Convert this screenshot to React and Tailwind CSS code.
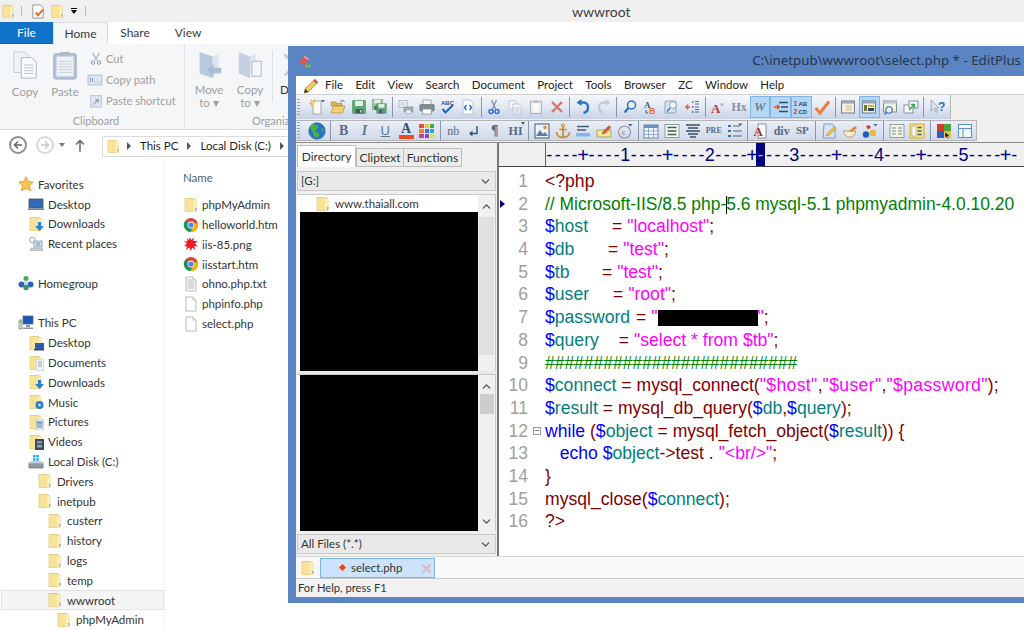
import React from "react";
import { ChevronDown, ChevronUp } from "lucide-react";

const S = ({ children, s = 16, v = 16, className = "" }) => (
  <svg width={s} height={s} viewBox={`0 0 ${v} ${v}`} className={`shrink-0 ${className}`}>{children}</svg>
);

const Folder = ({ s = 16 }) => (
  <S s={s}>
    <path d="M2 1.500h8.500l2.500 1.500v11.500H2z" fill="#f2d67f" stroke="#d8b862" strokeWidth=".6" />
    <path d="M9.500 2.200l3.500 1v11.300H9.500z" fill="#fbeeb8" />
    <path d="M2.300 2h7v12.300h-7z" fill="#f8e39a" />
    <path d="M12 11h1.400v2.400H12z" fill="#7fb2c9" />
  </S>
);
const FolderBadge = ({ b }) => (
  <span className="relative inline-flex w-4 h-4 shrink-0">
    <Folder />
    <span className="absolute right-0 bottom-0">{b}</span>
  </span>
);
const Chrome = () => (
  <S>
    <circle cx="8" cy="8" r="7" fill="#db4437" />
    <path d="M8 8L1.900 11.500A7 7 0 0 1 2.600 3.400z" fill="#0f9d58" />
    <path d="M8 8l6.500 -2.500A7 7 0 0 1 7 15z" fill="#f4b400" />
    <path d="M1.900 11.500A7 7 0 0 0 7.500 15L10 10z" fill="#0f9d58" />
    <circle cx="8" cy="8" r="3.400" fill="#fff" />
    <circle cx="8" cy="8" r="2.600" fill="#4285f4" />
  </S>
);
const Page = ({ lines }) => (
  <S>
    <path d="M3 1h7l3 3v11H3z" fill="#fcfcfc" stroke="#a9a9a9" strokeWidth=".8" />
    <path d="M10 1v3h3" fill="#eee" stroke="#a9a9a9" strokeWidth=".6" />
    {lines && <path d="M4.500 4h5M4.500 6h7M4.500 8h7M4.500 10h7M4.500 12h7" stroke="#9a9a9a" strokeWidth=".7" />}
  </S>
);
const Splat = () => (
  <S>
    <path d="M7 1l1.200 3L11 1.500l-.6 3.500L15 5l-3 2.500 3 3-3.600-.4.6 3.600-2.800-2L7.500 15l-1-3.500L3 14l1-3.500L1 10l3-2.500L1 5l3.500.5L4 2l2 2z" fill="#ee1c25" />
  </S>
);
const Star = () => (
  <S>
    <path d="M8 .8l2.200 4.700 5 .6-3.700 3.500 1 5.100L8 12.200l-4.500 2.500 1-5.100L.8 6.100l5-.6z" fill="#fcc54c" stroke="#e98a2e" strokeWidth=".8" />
  </S>
);
const Monitor = () => (
  <S>
    <rect x="1" y="3" width="14" height="9" fill="#2f6cb5" stroke="#3c4f68" strokeWidth=".8" />
    <path d="M0 12.500h16V14H0z" fill="#6e7f92" />
  </S>
);
const Recent = () => (
  <S>
    <circle cx="4.500" cy="4" r="3" fill="#eef2f5" stroke="#8aa0a8" strokeWidth=".8" />
    <rect x="6" y="5" width="8" height="6" fill="#d7e2ea" stroke="#7e8f9c" strokeWidth=".7" />
    <path d="M3 12h11l1 2.500H2z" fill="#c9cfd4" stroke="#8c959c" strokeWidth=".5" />
    <path d="M8 7h4M8 9h4" stroke="#5b86ad" strokeWidth=".8" />
  </S>
);
const Home = () => (
  <S>
    <circle cx="8" cy="3.500" r="2.500" fill="#4aa84a" />
    <circle cx="3.500" cy="9.500" r="3" fill="#2d63c8" />
    <circle cx="12.500" cy="9.500" r="3" fill="#2d63c8" />
    <circle cx="8" cy="12.500" r="2.700" fill="#3f9a3f" />
    <circle cx="8" cy="8" r="1.800" fill="#b9d2ee" />
  </S>
);
const PC = () => (
  <S>
    <rect x="5" y="1" width="10" height="8" fill="#1b55c0" stroke="#5f6b78" strokeWidth=".8" />
    <path d="M8 10h4v2H8zM5 12.500h10v1.500H5z" fill="#8b98a4" />
    <rect x="1" y="5" width="3" height="9" fill="#cfd6db" stroke="#6b7c5c" strokeWidth=".6" />
    <rect x="1.800" y="6.500" width="1.400" height="1.400" fill="#4fb04f" />
  </S>
);
const Disk = () => (
  <S>
    <path d="M5 1h2.500v2.500H5zM8.300 1h2.500v2.500H8.300zM5 4.300h2.500v2.500H5zM8.300 4.300h2.500v2.500H8.300z" fill="#19aeea" />
    <path d="M1 9h14v5H1z" fill="#8e9aa3" stroke="#5f6a72" strokeWidth=".7" />
    <path d="M1 8l2-1h10l2 1v1.500H1z" fill="#c8d0d5" />
    <rect x="2.500" y="11" width="2" height="1.200" fill="#54d14d" />
  </S>
);
const Dl = <svg width="9" height="10" viewBox="0 0 9 10"><path d="M3 0h3v4h3L4.500 9 0 4h3z" fill="#2d7fd3" /></svg>;
const Ds = <svg width="10" height="9" viewBox="0 0 10 9"><path d="M1 1h9v6H1z" fill="#245fa8" /><path d="M0 7h10v1.500H0z" fill="#3a4a5c" /></svg>;
const Dc = <svg width="8" height="12" viewBox="0 0 8 12"><path d="M0 0h8v12H0z" fill="#f3f5f6" stroke="#9aa5ad" strokeWidth=".6" /><path d="M2 3h4M2 5h4M2 7h4" stroke="#7a8a98" strokeWidth=".7" /></svg>;
const Mu = <svg width="9" height="10" viewBox="0 0 9 10"><circle cx="4.500" cy="5" r="4" fill="#2d7fd3" /><circle cx="4.500" cy="5" r="1.200" fill="#fff" /></svg>;
const Pi = <svg width="9" height="11" viewBox="0 0 9 11"><path d="M0 0h9v11H0z" fill="#e9eef1" stroke="#8b9aa3" strokeWidth=".5" /><path d="M1.500 2h6v3h-6z" fill="#6bb3dd" /><path d="M1.500 6h6M1.500 8h6" stroke="#5b7d93" /></svg>;
const Vi = <svg width="9" height="11" viewBox="0 0 9 11"><path d="M0 0h9v11H0z" fill="#3f4a52" /><path d="M2 2h5v2.500H2z" fill="#6a9cc0" /><path d="M2 6h5v2.500H2z" fill="#86a7bb" /></svg>;

const navRows = [
  { t: "Favorites", l: 0, i: <Star /> },
  { t: "Desktop", l: 1, i: <Monitor /> },
  { t: "Downloads", l: 1, i: <FolderBadge b={Dl} /> },
  { t: "Recent places", l: 1, i: <Recent /> },
  {},
  { t: "Homegroup", l: 0, i: <Home /> },
  {},
  { t: "This PC", l: 0, i: <PC /> },
  { t: "Desktop", l: 1, i: <FolderBadge b={Ds} /> },
  { t: "Documents", l: 1, i: <FolderBadge b={Dc} /> },
  { t: "Downloads", l: 1, i: <FolderBadge b={Dl} /> },
  { t: "Music", l: 1, i: <FolderBadge b={Mu} /> },
  { t: "Pictures", l: 1, i: <FolderBadge b={Pi} /> },
  { t: "Videos", l: 1, i: <FolderBadge b={Vi} /> },
  { t: "Local Disk (C:)", l: 1, i: <Disk /> },
  { t: "Drivers", l: 2, i: <Folder /> },
  { t: "inetpub", l: 2, i: <Folder /> },
  { t: "custerr", l: 3, i: <Folder /> },
  { t: "history", l: 3, i: <Folder /> },
  { t: "logs", l: 3, i: <Folder /> },
  { t: "temp", l: 3, i: <Folder /> },
  { t: "wwwroot", l: 3, i: <Folder />, sel: true },
  { t: "phpMyAdmin", l: 4, i: <Folder /> },
];
const indent = ["pl-[18px]", "pl-[28px]", "pl-[37px]", "pl-[47px]", "pl-[56px]"];

const files = [
  ["phpMyAdmin", <Folder />],
  ["helloworld.htm", <Chrome />],
  ["iis-85.png", <Splat />],
  ["iisstart.htm", <Chrome />],
  ["ohno.php.txt", <Page lines />],
  ["phpinfo.php", <Page />],
  ["select.php", <Page />],
];

function Ribbon() {
  return (
    <div className="h-[86px] bg-[#f5f6f7] border-b border-[#dadbdc] flex text-[#a0a0a0] text-[11px]">
      <div className="w-[185px] border-r border-[#e2e3e4] flex flex-col">
        <div className="flex h-[69px] pt-[6px]">
          <div className="w-[50px] flex flex-col items-center">
            <S s={30}>
              <path d="M2 1h6l2 2v9H2z" fill="#eef3fa" stroke="#bccbe0" strokeWidth=".5" />
              <path d="M6 4h5.500L14 6.500V15H6z" fill="#f8fafc" stroke="#a9b6c8" strokeWidth=".5" />
              <path d="M7.500 8h5M7.500 9.500h5M7.500 11h5M7.500 12.500h5" stroke="#b5bfcc" strokeWidth=".5" />
            </S>
            <span className="mt-[3px] text-[11.500px]">Copy</span>
          </div>
          <div className="w-[30px] flex flex-col items-center">
            <S s={30}>
              <rect x="2" y="2" width="12" height="13.500" rx="1" fill="#b6c4d8" stroke="#8d9db4" strokeWidth=".4" />
              <rect x="3.500" y="3.500" width="9" height="10.500" fill="#eef2f7" />
              <path d="M4.500 6h7M4.500 7.500h7M4.500 9h7M4.500 10.500h7M4.500 12h7" stroke="#c5cedb" strokeWidth=".5" />
              <rect x="5.500" y="1" width="5" height="2" fill="#aeb9c8" />
            </S>
            <span className="mt-[3px] text-[11.500px]">Paste</span>
          </div>
          <div className="ml-[9px] flex flex-col gap-[3px]">
            <div className="flex items-center gap-[3px] h-[18px]">
              <S s={14}><path d="M4 1l5 8M12 1L7 9" stroke="#a9b2bd" strokeWidth="1.300" fill="none" /><circle cx="4.500" cy="12" r="2" fill="none" stroke="#8c9bb0" strokeWidth="1.200" /><circle cx="11.500" cy="12" r="2" fill="none" stroke="#8c9bb0" strokeWidth="1.200" /></S>
              <span>Cut</span>
            </div>
            <div className="flex items-center gap-[3px] h-[18px] -ml-[2px]">
              <S s={16}><rect x="1" y="3" width="14" height="10" fill="#dbe4f1" stroke="#a3b2c7" strokeWidth=".7" /><path d="M3.500 6v4M5.500 6v4M8 10h.6M10 10h.6M12 10h.6" stroke="#8c9bb0" /></S>
              <span>Copy path</span>
            </div>
            <div className="flex items-center gap-[3px] h-[18px]">
              <S s={14}><rect x="2" y="2" width="12" height="13" fill="#dfe6ef" stroke="#a3b2c7" strokeWidth=".8" /><path d="M5 12l5-5M7 6.500h3.500V10" stroke="#7f93ad" strokeWidth="1.200" fill="none" /></S>
              <span>Paste shortcut</span>
            </div>
          </div>
        </div>
        <div className="text-center pl-[8px] leading-[16px]">Clipboard</div>
      </div>
      <div className="flex-1 flex flex-col">
        <div className="flex h-[69px] pt-[6px] text-[11.500px]">
          <div className="w-[42px] ml-[3px] flex flex-col items-center leading-[13px]">
            <S s={30}><path d="M3 1l7 2.500V15l-7-2.500z" fill="#b9c9de" /><path d="M10 3.500L13 2v10h-3z" fill="#dce5f0" /><path d="M7 10.500l3.500-3v2h4v3h-4v2z" fill="#a9bdd6" /></S>
            <span className="mt-[3px]">Move</span>
            <span>to ▾</span>
          </div>
          <div className="w-[40px] flex flex-col items-center leading-[13px]">
            <S s={30}><path d="M2 1l6 2.500V15l-6-2.500z" fill="#c3d1e3" /><path d="M8 3.500L11 2v10H8z" fill="#dce5f0" /><path d="M9 6h5v8H9z" fill="#f4f7fa" stroke="#a9b6c8" strokeWidth=".5" /></S>
            <span className="mt-[3px]">Copy</span>
            <span>to ▾</span>
          </div>
          <div className="ml-[2px] w-px h-[52px] bg-[#dfe0e1]" />
          <div className="ml-[7px] flex flex-col items-start">
            <S s={30}><path d="M3 2l5 5 5-5 1 1-5 5 5 5-1 1-5-5-5 5-1-1 5-5-5-5z" fill="#c5ccd6" /></S>
            <span className="mt-[3px] leading-[13px] text-[#333]">De</span>
          </div>
        </div>
        <div className="leading-[16px] pl-[67px]">Organize</div>
      </div>
    </div>
  );
}

function Explorer() {
  return (
    <div className="h-full flex flex-col font-['Lato',sans-serif]">
      <div className="h-[22px] bg-[#f0f0f0] flex items-center pl-[1px] relative">
        <Folder s={15} />
        <span className="w-px h-[10px] bg-[#bbb] ml-[5px]" />
        <span className="ml-[9px]"><S s={15}><path d="M2 1h8l3 3v11H2z" fill="#fff" stroke="#777" strokeWidth=".8" /><path d="M5 9l2.500 3L13 6" stroke="#e06a1c" strokeWidth="2" fill="none" /></S></span>
        <span className="ml-[4px]"><Folder s={15} /></span>
        <span className="ml-[6px] flex flex-col items-center gap-[1px]"><span className="w-[6px] h-px bg-black" /><span className="w-0 h-0 border-x-[3.500px] border-x-transparent border-t-[4px] border-t-black" /></span>
        <span className="w-px h-[10px] bg-[#bbb] ml-[8px]" />
        <span className="ml-[486px] text-[14px] text-[#3f3f3f]">wwwroot</span>
      </div>
      <div className="h-[22px] flex items-stretch text-[12px] text-[#3b3b3b] bg-white">
        <div className="w-[53px] bg-[#1072c9] text-white flex items-center justify-center border-b border-[#0d5fa8]">File</div>
        <div className="w-[55px] bg-[#f5f6f7] border-x border-t border-[#dadbdc] flex items-center justify-center">Home</div>
        <div className="w-[54px] flex items-center justify-center">Share</div>
        <div className="w-[52px] flex items-center justify-center">View</div>
      </div>
      <Ribbon />
      <div className="h-[30px] flex items-center text-[11.500px] text-[#1e1e1e]">
        <div className="w-[102px] flex items-center pl-[9px]">
          <span className="w-[18px] h-[18px] rounded-full border-2 border-[#8f8f8f] flex items-center justify-center">
            <svg width="10" height="10" viewBox="0 0 10 10"><path d="M9 5H2M5 1.500L1.500 5 5 8.500" stroke="#666" strokeWidth="1.500" fill="none" /></svg>
          </span>
          <span className="ml-[9px] w-[18px] h-[18px] rounded-full border-2 border-[#d8d8d8] flex items-center justify-center">
            <svg width="10" height="10" viewBox="0 0 10 10"><path d="M1 5h7M5 1.500L8.500 5 5 8.500" stroke="#c8c8c8" strokeWidth="1.500" fill="none" /></svg>
          </span>
          <span className="ml-[5px] w-0 h-0 border-x-[3.500px] border-x-transparent border-t-[4px] border-t-[#777]" />
          <svg className="ml-[10px]" width="10" height="13" viewBox="0 0 10 13"><path d="M5 13V2M1 5.500L5 1.500l4 4" stroke="#666" strokeWidth="1.500" fill="none" /></svg>
        </div>
        <div className="flex-1 h-[21px] mt-[2px] border border-[#dcdcdc] flex items-center pl-[3px]">
          <Folder s={15} />
          <span className="ml-[6px] w-0 h-0 border-y-[4px] border-y-transparent border-l-[4px] border-l-[#555]" />
          <span className="ml-[9px]">This PC</span>
          <span className="ml-[9px] w-0 h-0 border-y-[4px] border-y-transparent border-l-[4px] border-l-[#555]" />
          <span className="ml-[9px]">Local Disk (C:)</span>
          <span className="ml-[9px] w-0 h-0 border-y-[4px] border-y-transparent border-l-[4px] border-l-[#555]" />
        </div>
      </div>
      <div className="flex-1 flex min-h-0 text-[11.500px] text-[#333]">
        <div className="w-[165px] border-r border-[#f2f2f2] pt-[14.500px]">
          {navRows.map((r, i) => (
            <div key={i} className={`h-[19.800px] flex items-center gap-[4px] whitespace-nowrap ${r.t ? indent[r.l] : ""} ${r.sel ? "bg-[#f5f5f5] outline outline-[#e2e2e2] -outline-offset-1 ml-[1px] !pl-[46px]" : ""}`}>
              {r.i}
              <span>{r.t}</span>
            </div>
          ))}
        </div>
        <div className="flex-1 pl-[18px]">
          <div className="h-[35px] pt-[9px] text-[#4c607a]">Name</div>
          {files.map(([t, ic]) => (
            <div key={t} className="h-[19.800px] flex items-center gap-[3px]">
              {ic}
              <span>{t}</span>
            </div>
          ))}
        </div>
      </div>
    </div>
  );
}

/* ---------- EditPlus toolbar icons ---------- */
const Floppy = ({ c = "#5aa86f" }) => (
  <>
    <path d="M1.500 1.500h13v13h-13z" fill={c} stroke="#3f8a55" strokeWidth=".5" />
    <rect x="4" y="2" width="8" height="5" fill="#e4efe6" />
    <rect x="4.500" y="10" width="7" height="4.500" fill="#4a5860" />
    <rect x="9" y="11" width="1.500" height="2.500" fill="#c9d2d6" />
  </>
);
const Txt = ({ c = "text-[#5a6b80]", children, cls = "text-[12px]" }) => (
  <span className={`font-['Liberation_Serif',serif] font-bold leading-none ${cls} ${c}`}>{children}</span>
);
const Win = ({ children }) => (
  <S>
    <rect x="1.500" y="2" width="13" height="12" fill="#f3f1e2" stroke="#66707c" strokeWidth=".9" />
    <rect x="1.500" y="2" width="13" height="2.500" fill="#99a6b6" />
    {children}
  </S>
);
const Arrow = <span className="absolute right-[1px] top-[2px] w-0 h-0 border-x-[2.500px] border-x-transparent border-t-[3px] border-t-[#4d6079]" />;

const I = {
  new: <S><path d="M4 2h8v13H4z" fill="#fdfbf2" stroke="#8a8a80" strokeWidth=".7" /><path d="M4 4L2 1M4 4L0.500 4.500M4 4L6 .8M4 4L2 7" stroke="#f4a62a" strokeWidth="1.300" /><circle cx="4" cy="4" r="1.600" fill="#ffd75a" /><path d="M12 1h4l-2 2.500z" fill="#4d6079" /></S>,
  open: <S><path d="M1 3h5l1 1.500h5V7H1z" fill="#e0b45c" stroke="#a97f2c" strokeWidth=".6" /><path d="M1 14l2.500-7H15l-2.500 7z" fill="#f3cf78" stroke="#a97f2c" strokeWidth=".6" /><path d="M10 3c1.500-2 3.500-2 4.500 0" stroke="#5b85b5" fill="none" strokeWidth="1.100" /></S>,
  save: <S><Floppy /></S>,
  saveall: <S><g transform="translate(-1 -1) scale(.8)"><Floppy c="#8cc39b" /></g><g transform="translate(3.500 3.500) scale(.75)"><Floppy /></g></S>,
  preview: <S><rect x="1" y="1.500" width="8" height="7" fill="#eef1f4" stroke="#98a4b1" strokeWidth=".7" /><path d="M2.500 4h4M2.500 6h4" stroke="#98a4b1" strokeWidth=".6" /><rect x="6" y="8" width="9" height="5" fill="#a8b1bb" stroke="#6f7a85" strokeWidth=".5" /><rect x="8" y="11" width="5" height="3.500" fill="#f4f6f7" stroke="#88929c" strokeWidth=".5" /></S>,
  print: <S><rect x="4" y="1" width="8" height="5" fill="#f6f7f8" stroke="#7f8a94" strokeWidth=".7" /><rect x=".8" y="5.500" width="14.400" height="6.500" rx="1" fill="#7f8b96" stroke="#59636d" strokeWidth=".5" /><rect x="3.500" y="10" width="9" height="5" fill="#fbfbfb" stroke="#7f8a94" strokeWidth=".7" /></S>,
  spell: <S><text x="2" y="6" fontSize="6" fontWeight="700" fontFamily="Liberation Sans" fill="#44505e">ABC</text><path d="M3.500 10l3 3.500L14 6" stroke="#2a66b8" strokeWidth="2.200" fill="none" /></S>,
  html: <S><path d="M3 1h7l3 3v11H3z" fill="#fbfcfd" stroke="#a8b4c0" strokeWidth=".7" /><path d="M6.500 6L4.500 8.500l2 2.500M9.500 6l2 2.500-2 2.500" stroke="#2277cc" strokeWidth="1.500" fill="none" /></S>,
  cut: <S><path d="M10.500 1L6.500 10M5.500 1l4 9" stroke="#7f90a5" strokeWidth="1.300" /><circle cx="5" cy="12.500" r="2" fill="none" stroke="#2f6fc9" strokeWidth="1.500" /><circle cx="11" cy="12.500" r="2" fill="none" stroke="#2f6fc9" strokeWidth="1.500" /></S>,
  copy: <S><path d="M2 1.500h6l1.500 1.500v7H2z" fill="#f0f2f4" stroke="#b7bfc8" strokeWidth=".7" /><path d="M6 5h5.500L14 7.500V15H6z" fill="#f9fafb" stroke="#a8b1bb" strokeWidth=".7" /><path d="M7.500 9h5M7.500 11h5M7.500 13h5" stroke="#88a7c7" strokeWidth=".7" /></S>,
  paste: <S><rect x="2.500" y="2.500" width="11" height="12" fill="#e8e9ea" stroke="#a8adb3" strokeWidth=".9" /><rect x="4.500" y="4.500" width="7" height="8" fill="#f8f8f8" /><rect x="5.500" y="1.500" width="5" height="2" fill="#b4b9bf" /></S>,
  del: <S><path d="M3 3l10 10M13 3L3 13" stroke="#d9736f" strokeWidth="2.400" /></S>,
  undo: <S><path d="M3 3.500h5.500c6 0 6 9 0 10.500" stroke="#2277c9" strokeWidth="2.400" fill="none" /><path d="M6.500 0v7L1.500 3.500z" fill="#2277c9" /></S>,
  redo: <S><path d="M13 3.500H7.500c-6 0-6 9 0 10.500" stroke="#c3ccd5" strokeWidth="2.400" fill="none" /><path d="M9.500 0v7l5-3.500z" fill="#c3ccd5" /></S>,
  find: <S><circle cx="9.500" cy="6" r="4" fill="#eaf3fb" stroke="#2a6fb8" strokeWidth="1.500" /><path d="M6.500 9L2.500 13.500" stroke="#2a6fb8" strokeWidth="2.200" /></S>,
  repl: <S><text x="1" y="9" fontSize="9" fontWeight="700" fontFamily="Liberation Serif" fill="#3d5a80">A</text><path d="M3 11v3h2" stroke="#3d5a80" fill="none" /><text x="6" y="15" fontSize="9" fontWeight="700" fontFamily="Liberation Sans" fill="#e9723a">B</text></S>,
  func: <S><rect x="2" y="2" width="11" height="12" rx="1" fill="#d5e3f1" stroke="#7f97b3" strokeWidth=".8" /><circle cx="10" cy="6" r="3.500" fill="#f3f7fb" stroke="#7f97b3" strokeWidth=".9" /><path d="M7 9l-3 3.500" stroke="#4a78a8" strokeWidth="1.500" /></S>,
  ins: <S><path d="M1 8h5M3.500 5.500v5" stroke="#e8562e" strokeWidth="1.500" /><path d="M8 3h1.500M8 8h1.500M8 13h1.500" stroke="#4d6079" strokeWidth="1.500" /><path d="M11 2.500h4M11 5h4M11 8h4M11 10.500h4M11 13h4" stroke="#4d6079" strokeWidth=".9" /></S>,
  aa: <S><text x="1" y="13.500" fontSize="13" fontWeight="700" fontFamily="Liberation Serif" fill="#c23a3a">A</text><text x="10" y="7" fontSize="7" fontWeight="700" fontFamily="Liberation Serif" fill="#9aa7b6">a</text></S>,
  wrapind: <S><path d="M6 3.500h9M8 8h7M6 12.500h9" stroke="#334a66" strokeWidth="1.400" /><path d="M1 8h5M4 6l2.500 2L4 10" stroke="#e2502e" strokeWidth="1.300" fill="none" /></S>,
  nums: <S><text x=".5" y="7" fontSize="7" fontWeight="700" fontFamily="Liberation Sans" fill="#cc3a2a">1</text><text x="5.500" y="7" fontSize="6" fontWeight="700" fontFamily="Liberation Sans" fill="#31485f">AB</text><text x=".5" y="15" fontSize="7" fontWeight="700" fontFamily="Liberation Sans" fill="#cc3a2a">2</text><text x="5.500" y="15" fontSize="6" fontWeight="700" fontFamily="Liberation Sans" fill="#31485f">CD</text></S>,
  check: <S><path d="M1.500 9l4.500 5L15 2.500" stroke="#ee7b3a" strokeWidth="3" fill="none" /></S>,
  w1: <Win><rect x="6" y="6" width="6" height="6" fill="#e7d8b4" /></Win>,
  w2: <Win><path d="M3 6h3v6H3z" fill="#6b7b3f" /><path d="M7 6h6v2H7z" fill="#d8b13a" /><path d="M7 9h6v3H7z" fill="#33485f" /></Win>,
  w3: <S><rect x="1.500" y="2" width="13" height="11" fill="#f3f1e2" stroke="#7a8490" strokeWidth=".9" /><rect x="1.500" y="2" width="13" height="2.500" fill="#b9c3cf" /><circle cx="7" cy="11" r="3.200" fill="#e8f0f8" stroke="#3a6ea8" strokeWidth="1.100" /><path d="M4.500 13.500L2.500 15.500" stroke="#3a6ea8" strokeWidth="1.500" /></S>,
  w4: <S><rect x="1" y="6" width="9" height="8" fill="#fff" stroke="#7a8490" strokeWidth=".9" /><rect x="6" y="2" width="9" height="7" fill="#f4f7f4" stroke="#7a8490" strokeWidth=".9" /><path d="M6 11l5-5M8 5.500h3.500V9" stroke="#35a35b" strokeWidth="1.300" fill="none" /></S>,
  help: <S><path d="M2 1v11l3-2.500 2 4 1.500-.8-2-3.700h3.500z" fill="#dde3ea" stroke="#8894a3" strokeWidth=".7" /><text x="9" y="12" fontSize="12" fontWeight="700" fontFamily="Liberation Sans" fill="#2a6fb8">?</text></S>,
  globe: <S s={18}><circle cx="8" cy="8" r="7.300" fill="#2474c8" stroke="#1b4d86" strokeWidth=".5" /><path d="M5 2c3 0 5 1 4 3S6 6 7 8s3 1 3 3-2 3-3 3c-2-2-3-3-3-5S2 7 2 5s1-3 3-3zM12 5c1.500 0 2.500 2 2 3.500-1 .5-2-.5-2-1.500z" fill="#46b04b" /></S>,
  colors: <div className="grid grid-cols-3 gap-px w-[15px] h-[14px] relative"><span className="bg-[#e94b35]" /><span className="bg-[#f2c12e]" /><span className="bg-[#3aa757]" /><span className="bg-[#f07f24]" /><span className="bg-[#3f6fd8]" /><span className="bg-[#2ea8c9]" /><span className="bg-[#d83a9a]" /><span className="bg-[#8f3fd0]" /><span className="bg-[#e5e03a]" /></div>,
  ret: <S><path d="M11 3v7.500H5" stroke="#3a5474" strokeWidth="1.500" fill="none" /><path d="M6.500 7.500L3 10.500l3.500 3z" fill="#3a5474" /></S>,
  img: <S><rect x="1" y="1" width="14" height="14" fill="#eaf2fa" stroke="#3d5878" strokeWidth="1" /><path d="M2 13l4-6 3 4 2-2 3 4z" fill="#5b7d9e" /><circle cx="11" cy="4.500" r="1.800" fill="#e8873a" /></S>,
  anchor: <S><circle cx="8" cy="2.500" r="1.500" fill="none" stroke="#c98a34" strokeWidth="1.200" /><path d="M8 4v10.500M4.500 6.500h7M1.500 9c0 3.500 3 5.500 6.500 5.500s6.500-2 6.500-5.500" stroke="#c98a34" strokeWidth="1.700" fill="none" /></S>,
  lines: <S><path d="M2 3.500h12M2 7h9" stroke="#4a5a6c" strokeWidth="1.300" /><path d="M1 10h14v3.500H1z" fill="#7db7ec" /></S>,
  pen: <S><path d="M1 7h9l5 0v7H1z" fill="#f6e89a" stroke="#9a8a3a" strokeWidth=".7" /><path d="M6 11l1-2.500 6-6 2 2-6 6z" fill="#d8593a" stroke="#6d6d6d" strokeWidth=".4" /></S>,
  copyr: <S><circle cx="7.500" cy="9" r="6" fill="none" stroke="#8a97a6" strokeWidth="1.100" /><text x="5" y="12" fontSize="8" fontFamily="Liberation Serif" fill="#5f6d7d">c</text><path d="M11 1h4.500l-2.200 2.500z" fill="#4d6079" /></S>,
  table: <S><rect x="1" y="2" width="14" height="13" fill="#f3f6fa" stroke="#5b7ba3" strokeWidth=".9" /><rect x="1" y="2" width="14" height="3" fill="#6a90c4" /><path d="M1 8h14M1 11.500h14M5.500 5v10M10.500 5v10" stroke="#7d9abf" strokeWidth=".8" /></S>,
  left: <S><rect x="1" y="1.500" width="14" height="13" fill="#f7f9f4" stroke="#7c8b82" strokeWidth=".8" /><path d="M3.500 4.500h9M3.500 8h9M3.500 11.500h9" stroke="#3f5d4e" strokeWidth="1.300" /></S>,
  center: <S><path d="M1 2h14M3 5h10M1 8h14M3 11h10M5 14h6" stroke="#3c4f63" strokeWidth="1.300" /></S>,
  list: <S><path d="M1 3h3M1 8h3M1 13h3" stroke="#3c6da8" strokeWidth="2" /><path d="M6 3h7M6 8h9M6 13h9" stroke="#556779" strokeWidth="1.200" /><path d="M11 .5h4.500l-2.200 2.500z" fill="#4d6079" /></S>,
  adoc: <S><path d="M5 1h8v14H5z" fill="#fbfbfb" stroke="#6f7a85" strokeWidth=".8" /><text x=".5" y="13" fontSize="13" fontWeight="700" fontFamily="Liberation Serif" fill="#a8322d">A</text></S>,
  edit: <S><path d="M3 1h8l3 3v11H2z" fill="#d7e6f7" stroke="#5f88bb" strokeWidth=".8" /><path d="M5 13l1.500-3L13 3.500l2 2L8.500 12z" fill="#f1c24b" stroke="#a77b20" strokeWidth=".5" /></S>,
  cup: <S><path d="M1.500 8c0 4 3 6 6 6s6-2 6-6z" fill="#f8ead0" stroke="#a78854" strokeWidth=".8" /><path d="M7 8l6-5 2 2-5 4z" fill="#d88a3c" /></S>,
  balls: <S><circle cx="4" cy="11.500" r="3.200" fill="#1f5fc0" /><circle cx="11" cy="10" r="3.200" fill="#e9b93a" /><path d="M4 3l3-1 2 2.500-3 2z" fill="#d4402f" /><path d="M11.500 1h4l-2 2.500z" fill="#4d6079" /></S>,
  tree: <S><rect x="1" y="1.500" width="14" height="13" fill="#f5f2de" stroke="#7e8d99" strokeWidth=".8" /><path d="M3 5h4M9 5h4M3 8h4M9 8h4M3 11h4M9 11h4" stroke="#7487a0" strokeWidth="1.200" /></S>,
  clist: <S><rect x="1" y="1" width="14" height="14" fill="#fbe486" stroke="#d6a92a" strokeWidth="1" /><rect x="3" y="3" width="4" height="10" fill="#fff" stroke="#6f8a5f" strokeWidth=".5" /><path d="M8.500 4.500h4M8.500 8h4M8.500 11.500h4" stroke="#33608f" strokeWidth="1.300" /></S>,
  palette: <S><rect x="1" y="1" width="7" height="7" fill="#d93a2e" /><rect x="8" y="1" width="7" height="7" fill="#4ba33f" /><rect x="1" y="8" width="7" height="7" fill="#2f5fc4" /><rect x="8" y="8" width="7" height="7" fill="#edb92e" /><path d="M9 9v6l1.500-1.300 1 2 1-.5-1-2H14z" fill="#111" stroke="#fff" strokeWidth=".4" /></S>,
  frame: <S><rect x="1.500" y="1.500" width="13" height="13" fill="#eef5fb" stroke="#5c8fc0" strokeWidth="1" /><path d="M1.500 5.500h13M6 5.500v9" stroke="#5c8fc0" strokeWidth="1" /></S>,
};

const Sep = () => <span className="w-[5.500px] h-[20px] flex justify-center shrink-0"><span className="w-px h-full bg-[#8a97a8]" /></span>;
const Btn = ({ children, w = "w-[20.750px]", active, arrow }) => (
  <span className={`relative ${w} h-[22px] shrink-0 flex items-center justify-center ${active ? "bg-[#b5d6f5] outline outline-[#7fb5e6] -outline-offset-1" : ""}`}>
    {children}
    {arrow && Arrow}
  </span>
);
const Grip = () => (
  <span className="w-[3px] h-[17px] mr-[7px] ml-[1px] bg-[repeating-linear-gradient(to_bottom,#98a4b3_0,#98a4b3_1px,transparent_1px,transparent_3px)] shrink-0" />
);

const tb1 = ["new","open","save","saveall",0,"preview","print","spell","html",0,"cut","copy","paste","del",0,"undo","redo",0,"find","repl","func","ins",0,"aa","Hx","W","wrapind","nums","check",0,"w1","w2","w3","w4",0,"help"];

function Toolbars() {
  return (
    <>
      <div className="h-[25px] flex">
        <div className="w-[655px] h-[24px] flex items-center bg-gradient-to-b from-[#f4f6fa] via-[#e3e9f3] to-[#c6d2e6] border-r border-[#b5b5b5]">
          <Grip />
          {tb1.map((k, i) => {
            if (k === 0) return <Sep key={i} />;
            const active = ["W", "wrapind", "nums", "w2"].includes(k);
            if (k === "Hx") return <Btn key={i}><Txt c="text-[#8492a5]">Hx</Txt></Btn>;
            if (k === "W") return <Btn key={i} active><span className="font-['Liberation_Serif',serif] italic font-bold text-[13px] text-[#6f8096]">W</span></Btn>;
            return <Btn key={i} active={active}>{I[k]}</Btn>;
          })}
        </div>
      </div>
      <div className="h-[23px] pb-[1px] flex border-b border-[#8a8a8a]">
        <div className="w-[681px] flex items-center bg-gradient-to-b from-[#e9eef6] to-[#cfd9ea] border-r border-t border-b border-[#b5b5b5]">
          <Grip />
          <Tb2 />
        </div>
      </div>
    </>
  );
}
const W2 = "w-[20.800px]";
function Tb2() {
  const b = (k, arrow) => <Btn w={W2} arrow={arrow}>{I[k]}</Btn>;
  const t = (x, cls, arrow) => <Btn w={W2} arrow={arrow}><Txt cls={cls || "text-[12px]"}>{x}</Txt></Btn>;
  return (
    <>
      {b("globe")}<Sep />
      {t("B", "text-[14px]")}
      <Btn w={W2}><span className="font-['Liberation_Serif',serif] italic font-bold text-[14px] text-[#66768a]">I</span></Btn>
      <Btn w={W2}><span className="font-['Liberation_Sans',sans-serif] underline text-[13px] text-[#66768a]">U</span></Btn>
      <Btn w={W2}><span className="flex flex-col items-center leading-none"><span className="font-['Liberation_Serif',serif] font-bold text-[14px] text-[#2a4e86] leading-[12px]">A</span><span className="w-[15px] h-[4px] bg-[#ee4a1c]" /></span></Btn>
      <Btn w={W2}>{I.colors}</Btn><Sep />
      {t("nb", "text-[12px] !font-normal")}
      {b("ret")}
      {t("¶", "text-[14px]")}
      {t("HI", "text-[12px]", true)}<Sep />
      {b("img")}{b("anchor")}{b("lines")}{b("pen")}{b("copyr")}<Sep />
      {b("table")}{b("left")}{b("center")}
      {t("PRE", "text-[8px]")}
      {b("list")}<Sep />
      {b("adoc")}
      {t("div", "text-[12px]")}
      {t("SP", "text-[11px]")}<Sep />
      {b("edit")}{b("cup")}{b("balls")}<Sep />
      {b("tree")}{b("clist")}<Sep />
      {b("palette")}{b("frame")}
    </>
  );
}

function Combo({ label }) {
  return (
    <div className="h-[20px] bg-[#e9e9e9] border border-[#c8c8c8] flex items-center justify-between pl-[3px] pr-[3px] text-[11.500px] text-[#333]">
      <span>{label}</span>
      <ChevronDown size={13} strokeWidth={2.600} className="text-[#555]" />
    </div>
  );
}

function LeftPanel() {
  return (
    <div className="w-[199px] shrink-0 ml-[1px] flex flex-col text-[11.500px] text-[#333]">
      <div className="h-[25px] flex items-end pb-[1px] text-[12px]">
        <div className="w-[59px] h-[22px] bg-white border border-b-0 border-[#bdbdbd] flex items-center justify-center">Directory</div>
        <div className="w-[48px] h-[19px] bg-[#ececec] border border-[#bdbdbd] flex items-center justify-center">Cliptext</div>
        <div className="w-[58px] h-[19px] bg-[#ececec] border border-l-0 border-[#bdbdbd] flex items-center justify-center">Functions</div>
      </div>
      <div className="mt-[3px]"><Combo label="[G:]" /></div>
      <div className="mt-[3px] h-[177px] flex border-t border-[#c8c8c8] bg-white">
        <div className="flex-1 flex flex-col pl-[3px] pt-[1px]">
          <div className="h-[16px] shrink-0 flex items-center pl-[15px] gap-[4px]"><Folder /><span>www.thaiall.com</span></div>
          <div className="flex-1 bg-black" />
        </div>
        <div className="w-[18px] h-full bg-[#f0f0f0] flex flex-col items-center border-r border-[#c8c8c8]">
          <ChevronUp size={13} strokeWidth={2.600} className="text-[#555] mt-[5px] shrink-0" />
          <div className="w-[15px] h-[138px] bg-[#e0e0e0] mt-[4px]" />
        </div>
      </div>
      <div className="h-[4px] bg-[#e8e8e8] border-b border-[#c8c8c8]" />
      <div className="h-[156px] flex bg-white">
        <div className="flex-1 pl-[3px]"><div className="h-full bg-black" /></div>
        <div className="w-[18px] h-full bg-[#f0f0f0] flex flex-col items-center border-r border-[#c8c8c8]">
          <ChevronUp size={13} strokeWidth={2.600} className="text-[#555] mt-[5px] shrink-0" />
          <div className="w-[14px] h-[20px] bg-[#cdcdcd] mt-[1px]" />
          <div className="flex-1" />
          <ChevronDown size={13} strokeWidth={2.600} className="text-[#555] mb-[3px] shrink-0" />
        </div>
      </div>
      <div className="mt-[3px]"><Combo label="All Files (*.*)" /></div>
    </div>
  );
}

function Ruler() {
  const chars = [];
  for (let i = 0; i < 56; i++) {
    const n = i + 1;
    chars.push(n % 10 === 0 ? String(n / 10) : n % 5 === 0 ? "+" : "-");
  }
  return (
    <div className="h-[24px] bg-[#f0f0f0] border-b border-[#444] flex pl-[46px] overflow-hidden text-[#000080] font-['Liberation_Sans',sans-serif]">
      <span className="w-px h-full bg-[#5a5ab0] shrink-0 -mr-px" />
      {chars.map((c, i) => (
        <span key={i} className={`w-[8.460px] shrink-0 h-full flex items-center justify-center leading-none ${c === "-" ? "text-[18px]" : c === "+" ? "text-[20px]" : "text-[18px]"} ${i === 25 ? "bg-[#000080] text-[#9fa6d0]" : ""}`}>{c}</span>
      ))}
    </div>
  );
}

const M = "text-[#800000]", G = "text-[#008000] text-[17.450px]", B = "text-[#0000ff]", T = "text-[#008080]", P = "text-[#ff00ff]", PW = "text-[#ff00ff] tracking-[0.35px]";
const v = (n) => [[B, "$"], [T, n]];
const code = [
  [[M, "<?php"]],
  [[G, "// Microsoft-IIS/8.5 php-"], ["caret"], [G, "5.6 mysql-5.1 phpmyadmin-4.0.10.20"]],
  [...v("host"), [`${M} ml-[24px]`, "= "], [P, '"localhost"'], [M, ";"]],
  [...v("db"), [`${M} ml-[33.600px]`, "= "], [P, '"test"'], [M, ";"]],
  [...v("tb"), [`${M} ml-[32.500px]`, "= "], [P, '"test"'], [M, ";"]],
  [...v("user"), [`${M} ml-[24px]`, "= "], [P, '"root"'], [M, ";"]],
  [...v("password"), [`${M} ml-[6px]`, "= "], [P, '"'], ["black"], [P, '"'], [M, ";"]],
  [...v("query"), [`${M} ml-[20px]`, "= "], [P, '"select * from $tb"'], [M, ";"]],
  [[G, "##########################"]],
  [...v("connect"), [M, " = mysql_connect("], [PW, '"$host"'], [M, ","], [PW, '"$user"'], [M, ","], [PW, '"$password"'], [M, ");"]],
  [...v("result"), [M, " = mysql_db_query("], ...v("db"), [M, ","], ...v("query"), [M, ");"]],
  [[B, "while"], [M, " ("], ...v("object"), [M, " = mysql_fetch_object("], ...v("result"), [M, ")) {"]],
  [[B, "   echo "], ...v("object"), [M, "->test . "], [P, '"<br/>"'], [M, ";"]],
  [[M, "}"]],
  [[M, "mysql_close("], ...v("connect"), [M, ");"]],
  [[M, "?>"]],
];

function Editor() {
  return (
    <div className="flex-1 min-w-0 border-l-2 border-[#777] ml-[1px] flex flex-col bg-white">
      <Ruler />
      <div className="flex-1 pt-[3px] font-['Liberation_Sans',sans-serif] text-[17.600px] whitespace-pre overflow-hidden">
        {code.map((line, i) => (
          <div key={i} className="h-[22.700px] leading-[22.700px] flex relative">
            <span className="w-[29px] text-right text-[#a0a0a0] shrink-0">{i + 1}</span>
            <span className="w-[17px] shrink-0" />
            <span>
              {line.map((tk, j) =>
                tk[0] === "caret" ? <span key={j} className="inline-block w-px h-[18px] bg-black align-[-4px] -mr-px" /> :
                tk[0] === "black" ? <span key={j} className="inline-block w-[100px] h-[16px] bg-black align-[-3px]" /> :
                <span key={j} className={tk[0]}>{tk[1]}</span>
              )}
            </span>
            {i === 1 && <span className="absolute left-[1px] top-[7px] w-0 h-0 border-y-[4px] border-y-transparent border-l-[5px] border-l-[#000080]" />}
            {i === 11 && <span className="absolute left-[34px] top-[7px] w-[8px] h-[8px] border border-[#999] flex items-center justify-center"><span className="w-[4px] h-px bg-[#777]" /></span>}
          </div>
        ))}
      </div>
    </div>
  );
}

function EditPlus() {
  return (
    <div className="absolute left-[288px] top-[46px] w-[736px] h-[557px] bg-[#5b84c2] flex flex-col pb-[6px] font-['Lato',sans-serif]">
      <div className="h-[30px] flex items-center justify-between pl-[9px] pr-[3px]">
        <S s={15}><path d="M2 9l6-7 5 3-5 7z" fill="#d8564e" /><path d="M8 2l5 3-1 1.500-5-3z" fill="#f0a8a0" /><path d="M8 13l2-2 2 2-2 2zM11 13l2-2 2 2-2 2z" fill="#7ac143" /></S>
        <span className="text-[13.300px] text-[#26364d] font-['Noto_Sans',sans-serif]">{"C:\\inetpub\\wwwroot\\select.php * - EditPlus"}</span>
      </div>
      <div className="ml-[8px] flex-1 min-h-0 bg-[#f0f0f0] flex flex-col">
        <div className="h-[19px] bg-white border-b border-[#d0d0d0] flex items-center text-[11.500px] text-[#222] pl-[6px]">
          <S s={17}><path d="M2 15l1-4L12 2l3 3-9 9z" fill="#f2c75c" stroke="#8a6d2f" strokeWidth=".6" /><path d="M12 2l3 3-1.500 1.500-3-3z" fill="#c9584a" /><path d="M2 15l1-4 3 3z" fill="#3c3c3c" /></S>
          <div className="ml-[6px] flex gap-[12.400px]">
            {["File","Edit","View","Search","Document","Project","Tools","Browser","ZC","Window","Help"].map((m) => <span key={m}>{m}</span>)}
          </div>
        </div>
        <Toolbars />
        <div className="flex-1 min-h-0 flex">
          <LeftPanel />
          <Editor />
        </div>
        <div className="h-[22px] bg-[#f8f8f8] border-t border-[#d8d8d8] flex items-center text-[11.500px] text-[#333] pl-[4px]">
          <Folder />
          <div className="ml-[4px] w-[115px] h-[20px] bg-[#cbe4fb] border border-[#7fb5e6] flex items-center relative pl-[19px]">
            <span className="w-[5px] h-[5px] rotate-45 bg-[#e2481f] mr-[6px] shrink-0" />
            <span>select.php</span>
            <svg className="absolute right-[2px] top-[4px]" width="11" height="11" viewBox="0 0 11 11"><path d="M1.500 1.500l8 8M9.500 1.500l-8 8" stroke="#e9b6bb" strokeWidth="2.200" /></svg>
          </div>
        </div>
        <div className="h-[19px] bg-[#f2f2f2] border-t border-[#c8c8c8] flex items-center text-[11.200px] text-[#333] pl-[2px]">For Help, press F1</div>
      </div>
    </div>
  );
}

export default function App() {
  return (
    <div className="relative w-[1024px] h-[630px] overflow-hidden bg-white">
      <Explorer />
      <EditPlus />
    </div>
  );
}
